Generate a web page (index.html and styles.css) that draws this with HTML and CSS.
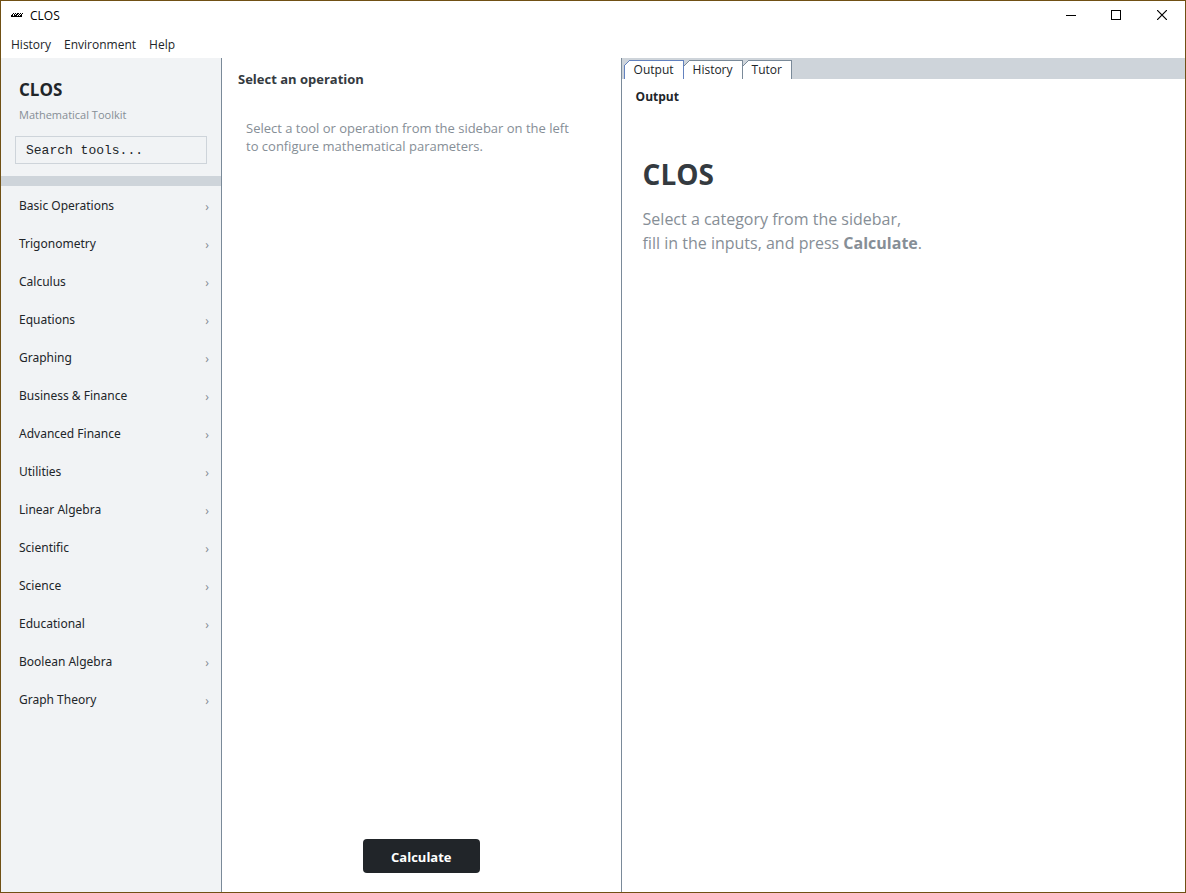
FILE: index.html
```html
<!DOCTYPE html>
<html lang="en">
<head>
<meta charset="utf-8">
<title>CLOS</title>
<link rel="stylesheet" href="styles.css">
</head>
<body>
<div class="window">
  <header class="titlebar">
    <svg class="app-icon" width="12" height="6" viewBox="0 0 12 6" shape-rendering="crispEdges" aria-hidden="true"><path d="M2 1h1v1H2zM4 1h1v1H4zM6 1h2v1H6zM9 1h1v1H9zM11 1h1v1h-1zM1 2h1v1H1zM3 2h1v1H3zM5 2h2v1H5zM8 2h1v1H8zM10 2h1v1h-1zM0 3h2v1H0zM3 3h3v1H3zM7 3h1v1H7zM9 3h2v1H9zM0 4h11v1H0z"/></svg>
    <span class="window-title">CLOS</span>
    <div class="window-controls">
      <button class="window-button" type="button" aria-label="Minimize"><svg width="11" height="10" shape-rendering="crispEdges"><path d="M1 5h10v1H1z"/></svg></button>
      <button class="window-button" type="button" aria-label="Maximize"><svg width="10" height="10" shape-rendering="crispEdges"><path d="M.5.5h9v9h-9z" fill="none" stroke="#000"/></svg></button>
      <button class="window-button" type="button" aria-label="Close"><svg width="10" height="10"><path d="M0 0l10 10M10 0L0 10" fill="none" stroke="#000" stroke-width="1.2"/></svg></button>
    </div>
  </header>
  <nav class="menubar" aria-label="Menu">
    <button class="menu" type="button">History</button>
    <button class="menu" type="button">Environment</button>
    <button class="menu" type="button">Help</button>
  </nav>
  <div class="workspace">
    <aside class="sidebar">
      <div class="brand">
        <h1 class="brand-name">CLOS</h1>
        <p class="brand-tagline">Mathematical Toolkit</p>
        <input class="search" type="text" aria-label="Search tools" value="Search tools...">
      </div>
      <nav class="categories" aria-label="Categories">
        <button class="category" type="button">Basic Operations<span class="chevron">›</span></button>
        <button class="category" type="button">Trigonometry<span class="chevron">›</span></button>
        <button class="category" type="button">Calculus<span class="chevron">›</span></button>
        <button class="category" type="button">Equations<span class="chevron">›</span></button>
        <button class="category" type="button">Graphing<span class="chevron">›</span></button>
        <button class="category" type="button">Business &amp; Finance<span class="chevron">›</span></button>
        <button class="category" type="button">Advanced Finance<span class="chevron">›</span></button>
        <button class="category" type="button">Utilities<span class="chevron">›</span></button>
        <button class="category" type="button">Linear Algebra<span class="chevron">›</span></button>
        <button class="category" type="button">Scientific<span class="chevron">›</span></button>
        <button class="category" type="button">Science<span class="chevron">›</span></button>
        <button class="category" type="button">Educational<span class="chevron">›</span></button>
        <button class="category" type="button">Boolean Algebra<span class="chevron">›</span></button>
        <button class="category" type="button">Graph Theory<span class="chevron">›</span></button>
      </nav>
    </aside>
    <main class="operation">
      <h2 class="operation-title">Select an operation</h2>
      <p class="operation-hint">Select a tool or operation from the sidebar on the left<br>to configure mathematical parameters.</p>
      <button class="calculate" type="button">Calculate</button>
    </main>
    <section class="results">
      <div class="tabs" role="tablist">
        <button class="tab tab-active" type="button" role="tab" aria-selected="true">Output</button>
        <button class="tab" type="button" role="tab" aria-selected="false">History</button>
        <button class="tab" type="button" role="tab" aria-selected="false">Tutor</button>
      </div>
      <div class="output" role="tabpanel">
        <h2 class="output-title">Output</h2>
        <div class="welcome">
          <h3 class="welcome-title">CLOS</h3>
          <p class="welcome-text">Select a category from the sidebar,<br>fill in the inputs, and press <b>Calculate</b>.</p>
        </div>
      </div>
    </section>
  </div>
</div>
</body>
</html>
```

FILE: styles.css
```css
* {
  box-sizing: border-box;
}

body {
  margin: 0;
  background: #fff;
  color: #212529;
  font-family: "Open Sans", "Noto Sans", sans-serif;
  font-size: 12px;
  line-height: 18px;
}

h1, h2, h3, p {
  margin: 0;
}

button {
  border: 0;
  padding: 0;
  background: none;
  color: inherit;
  font: inherit;
}

.window {
  display: flex;
  flex-direction: column;
  min-height: 100vh;
  border: 1px solid #705014;
}

.titlebar {
  display: flex;
  align-items: center;
  height: 28px;
  padding-left: 10px;
  color: #000;
}

.window-title {
  margin-left: 7px;
  line-height: 20px;
  padding-top: 2px;
}

.window-controls {
  display: flex;
  align-self: stretch;
  margin-left: auto;
}

.window-button {
  display: grid;
  place-items: center;
  width: 46px;
}

.menubar {
  display: flex;
  gap: 13px;
  height: 29px;
  padding: 3px 0 0 10px;
}

.workspace {
  display: grid;
  grid-template-columns: 221px 400fr 564fr;
  flex: 1;
}

.sidebar {
  border-right: 1px solid #7a8a99;
  background: #f1f3f5;
}

.brand {
  padding: 20px 14px 12px;
  border-bottom: 10px solid #ced4da;
}

.brand-name {
  padding-left: 4px;
  font-size: 17px;
  line-height: 24px;
}

.brand-tagline {
  margin: 4px 0 12px;
  padding-left: 4px;
  color: #868e96;
  font-size: 11px;
}

.search {
  display: block;
  width: 100%;
  height: 28px;
  padding: 1px 10px 0;
  border: 1px solid #ced4da;
  background: #f1f3f5;
  color: #212529;
  font: 13px "Liberation Mono", monospace;
}

.categories {
  display: flex;
  flex-direction: column;
  font-family: "Noto Sans", sans-serif;
}

.category {
  display: flex;
  align-items: center;
  justify-content: space-between;
  height: 38px;
  padding: 2px 12px 0 18px;
  text-align: left;
}

.chevron {
  padding-top: 2px;
  color: #868e96;
}

.operation {
  display: flex;
  flex-direction: column;
  padding: 12px 16px 19px;
  border-right: 1px solid #7a8a99;
}

.operation-title {
  color: #343a40;
  font-size: 13px;
  line-height: 18px;
}

.operation-hint {
  padding: 31px 8px;
  color: #868e96;
  font-size: 13px;
}

.calculate {
  align-self: center;
  margin-top: auto;
  padding: 9px 28px 7px;
  border-radius: 4px;
  background: #212529;
  color: #fff;
  font-size: 13px;
  font-weight: 700;
}

.tabs {
  display: flex;
  height: 21px;
  padding: 2px 2px 0;
  background: #ced4da;
}

.tab {
  position: relative;
  padding: 0 9px;
  border: 1px solid #7a8a99;
  border-width: 1px 1px 0 0;
  background: #fff;
  line-height: 18px;
}

.tab::before {
  content: "";
  position: absolute;
  top: -1px;
  left: 0;
  width: 6px;
  height: 6px;
  background: linear-gradient(135deg, #ced4da 42%, #7a8a99 42% 56%, #fff 56%);
}

.tab-active {
  border-color: #6382bf;
  border-left-width: 1px;
}

.tab-active::before {
  left: -1px;
  background: linear-gradient(135deg, #ced4da 42%, #6382bf 42% 56%, #fff 56%);
}

.output {
  padding: 9px 14px;
}

.output-title {
  font-size: 12px;
  line-height: 18px;
}

.welcome {
  padding: 48px 7px;
}

.welcome-title {
  color: #343a40;
  font-size: 28px;
  line-height: 40px;
}

.welcome-text {
  margin-top: 13px;
  color: #868e96;
  font-size: 16px;
  line-height: 24px;
}
```
